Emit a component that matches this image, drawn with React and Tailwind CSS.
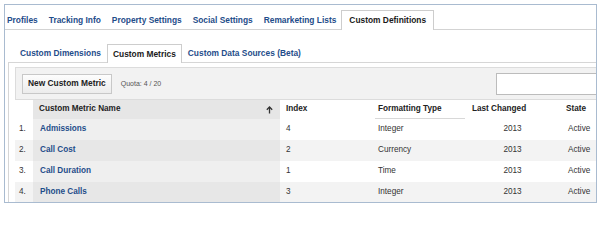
import React from "react";

const rows = [
  { n: "1.", name: "Admissions", idx: "4", type: "Integer" },
  { n: "2.", name: "Call Cost", idx: "2", type: "Currency" },
  { n: "3.", name: "Call Duration", idx: "1", type: "Time" },
  { n: "4.", name: "Phone Calls", idx: "3", type: "Integer" },
];

function SortArrow() {
  return (
    <svg width="7" height="8" viewBox="0 0 7 8" className="shrink-0">
      <path d="M3.5 1 L3.5 7.5" stroke="#333" strokeWidth="1.3" />
      <path d="M0.8 3.8 L3.5 1 L6.2 3.8" stroke="#333" strokeWidth="1.3" fill="none" />
    </svg>
  );
}

export default function App() {
  return (
    <div className="w-[600px] h-[210px] bg-white pt-[4px] pl-[4px] font-['Liberation_Sans',Arial,sans-serif]">
      <div className="w-[593px] h-[199px] border border-[#a9bbd0] overflow-hidden">
        {/* top tabs */}
        <div className="flex items-end h-[25px] border-b border-[#d3d3d3] pl-[2px] text-[8.4px] font-bold leading-none">
          <div className="-mb-px h-[20px] flex items-center pr-[11px] text-[#1f4d8a]">Profiles</div>
          <div className="-mb-px h-[20px] flex items-center pr-[11px] text-[#1f4d8a]">Tracking Info</div>
          <div className="-mb-px h-[20px] flex items-center pr-[11px] text-[#1f4d8a]">Property Settings</div>
          <div className="-mb-px h-[20px] flex items-center pr-[11px] text-[#1f4d8a]">Social Settings</div>
          <div className="-mb-px h-[20px] flex items-center pr-[5px] text-[#1f4d8a]">Remarketing Lists</div>
          <div className="-mb-px h-[20px] flex items-center px-[7px] bg-white border border-b-0 border-[#cdcdcd] text-[#1a1a1a]">
            Custom Definitions
          </div>
        </div>

        {/* sub tabs */}
        <div className="ml-[3px]">
          <div className="flex items-end h-[33px] border-b border-[#d6d6d6] pl-[12px] text-[8.4px] font-bold leading-none">
            <div className="-mb-px h-[19px] flex items-center pr-[6px] text-[#1f4d8a]">Custom Dimensions</div>
            <div className="-mb-px h-[19px] flex items-center px-[5px] bg-white border border-b-0 border-[#cdcdcd] text-[#1a1a1a]">
              Custom Metrics
            </div>
            <div className="-mb-px h-[19px] flex items-center pl-[6px] text-[#1f4d8a]">Custom Data Sources (Beta)</div>
          </div>

          {/* panel */}
          <div className="border-l border-[#d6d6d6] pl-[6px] pt-[4px]">
            {/* toolbar */}
            <div className="flex items-center h-[33px] border border-r-0 border-[#dcdcdc] bg-[#f2f2f2] pl-[6px]">
              <div className="h-[20px] px-[5px] flex items-center border border-[#c8c8c8] bg-gradient-to-b from-[#fdfdfd] to-[#ececec] text-[8.4px] font-bold text-[#222] leading-none">
                New Custom Metric
              </div>
              <div className="ml-[9px] text-[7px] text-[#555] leading-none">Quota: 4 / 20</div>
              <div className="ml-auto w-[100px] h-[22px] bg-white border border-r-0 border-[#bcbcbc]" />
            </div>

            {/* table */}
            <div className="text-[8.2px] leading-none">
              <div className="grid grid-cols-[18px_247px_95px_90px_95px_1fr] h-[19px] font-bold text-[#222]">
                <div className="bg-white" />
                <div className="bg-[#e6e6e6] flex items-center justify-between pl-[6px] pr-[7px]">
                  <span>Custom Metric Name</span>
                  <SortArrow />
                </div>
                <div className="flex items-center pl-[6px] bg-white">Index</div>
                <div className="flex items-center pl-[3px] bg-white border-b border-[#d8d8d8]">Formatting Type</div>
                <div className="flex items-center pl-[7px] bg-white">Last Changed</div>
                <div className="flex items-center pl-[6px] bg-white">State</div>
              </div>
              {rows.map((r, i) => {
                const odd = i % 2 === 1;
                return (
                  <div
                    key={r.n}
                    className={
                      odd
                        ? "grid grid-cols-[18px_247px_95px_90px_95px_1fr] h-[21px] bg-[#f3f3f3] text-[#333]"
                        : "grid grid-cols-[18px_247px_95px_90px_95px_1fr] h-[21px] bg-white text-[#333]"
                    }
                  >
                    <div className="flex items-center pl-[4px]">{r.n}</div>
                    <div
                      className={
                        odd
                          ? "flex items-center pl-[7px] bg-[#e7e7e7] font-bold text-[#1f4d8a]"
                          : "flex items-center pl-[7px] bg-[#efefef] font-bold text-[#1f4d8a]"
                      }
                    >
                      {r.name}
                    </div>
                    <div className="flex items-center pl-[6px]">{r.idx}</div>
                    <div className="flex items-center pl-[3px]">{r.type}</div>
                    <div className="flex items-center justify-center">2013</div>
                    <div className="flex items-center pl-[8px]">Active</div>
                  </div>
                );
              })}
            </div>
          </div>
        </div>
      </div>
    </div>
  );
}
